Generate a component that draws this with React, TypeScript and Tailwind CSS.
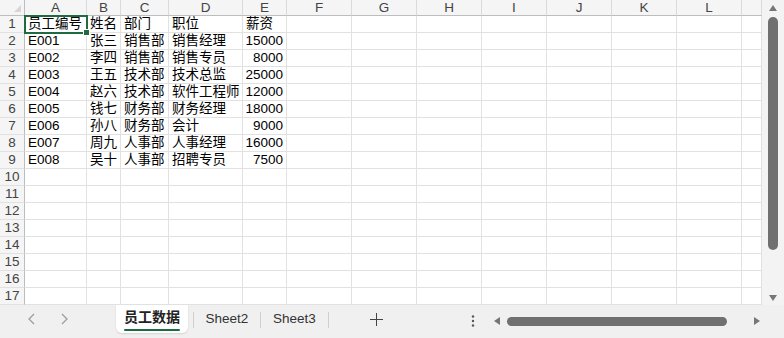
import React from "react";

const data: string[][] = [
  ["员工编号", "姓名", "部门", "职位", "薪资"],
  ["E001", "张三", "销售部", "销售经理", "15000"],
  ["E002", "李四", "销售部", "销售专员", "8000"],
  ["E003", "王五", "技术部", "技术总监", "25000"],
  ["E004", "赵六", "技术部", "软件工程师", "12000"],
  ["E005", "钱七", "财务部", "财务经理", "18000"],
  ["E006", "孙八", "财务部", "会计", "9000"],
  ["E007", "周九", "人事部", "人事经理", "16000"],
  ["E008", "吴十", "人事部", "招聘专员", "7500"],
];

const cols = ["A", "B", "C", "D", "E", "F", "G", "H", "I", "J", "K", "L", ""];
const font = { fontFamily: '"Liberation Sans", "Noto Sans CJK SC", sans-serif' };

function Tri({ dir }: { dir: "up" | "down" | "left" | "right" }) {
  const pts =
    dir === "up"
      ? "0,6 4,0 8,6"
      : dir === "down"
      ? "0,0 8,0 4,6"
      : dir === "left"
      ? "6,0 6,8 0,4"
      : "0,0 6,4 0,8";
  const w = dir === "up" || dir === "down" ? 8 : 6;
  const h = dir === "up" || dir === "down" ? 6 : 8;
  return (
    <svg width={w} height={h} viewBox={`0 0 ${w} ${h}`}>
      <polygon points={pts} fill="#767676" />
    </svg>
  );
}

export default function App() {
  const rows = Array.from({ length: 17 }, (_, i) => i);
  return (
    <div className="w-[784px] h-[338px] bg-white flex flex-col overflow-hidden text-[#000]" style={font}>
      <div className="flex h-[305px]">
        <div className="relative w-[762px] h-[305px] grid grid-cols-[25px_62px_34px_48px_74px_44px_65px_65px_65px_65px_65px_65px_65px_20px] grid-rows-[16px_17px_17px_17px_17px_17px_17px_17px_17px_17px_17px_17px_17px_17px_17px_17px_17px_17px]">
          {/* corner */}
          <div className="relative bg-[#f5f5f5] border-r border-b border-[#bdbdbd]">
            <svg className="absolute right-[3px] bottom-[3px]" width="7" height="7" viewBox="0 0 7 7">
              <polygon points="7,0 7,7 0,7" fill="#d6d6d6" />
            </svg>
          </div>
          {cols.map((c, i) => (
            <div
              key={"h" + i}
              className="bg-[#f5f5f5] border-r border-[#dadada] border-b border-b-[#bdbdbd] flex items-center justify-center text-[13.5px] leading-none text-[#444]"
            >
              {c}
            </div>
          ))}
          {rows.map((r) => (
            <React.Fragment key={"r" + r}>
              <div className="bg-[#f5f5f5] border-r border-r-[#bdbdbd] border-b border-b-[#e1e1e1] flex items-center justify-center text-[13.5px] leading-none text-[#444]">
                {r + 1}
              </div>
              {cols.map((_, ci) => {
                const val = data[r]?.[ci] ?? "";
                const isNum = /^\d+$/.test(val);
                return (
                  <div
                    key={"c" + r + "-" + ci}
                    className={
                      "border-r border-b border-[#e1e1e1] flex items-center overflow-hidden whitespace-nowrap text-[13.5px] leading-none px-[3px] " +
                      (isNum ? "justify-end" : "justify-start")
                    }
                  >
                    {val}
                  </div>
                );
              })}
            </React.Fragment>
          ))}
          {/* selection overlay */}
          <div className="absolute left-[24px] top-[15px] w-[64px] h-[19px] border-2 border-[#1e6b41] pointer-events-none">
            <div className="absolute right-[-4px] bottom-[-4px] w-[5px] h-[5px] bg-[#1e6b41] border border-white box-content" />
          </div>
        </div>
        <div className="w-[22px] h-[305px] bg-[#f3f3f3] flex flex-col items-center pt-[5px]">
          <Tri dir="up" />
          <div className="mt-[6px] w-[10px] h-[233px] rounded-full bg-[#707070]" />
          <div className="mt-auto mb-[4px]">
            <Tri dir="down" />
          </div>
        </div>
      </div>
      <div className="flex-1 bg-[#f0f0f0] flex items-start">
        <div className="w-[116px] h-[28px] flex items-center">
          <span className="ml-[25px] w-[14px] flex justify-center">
            <svg width="8" height="12" viewBox="0 0 8 12">
              <polyline points="6,1 1,6 6,11" fill="none" stroke="#9a9a9a" strokeWidth="1.2" />
            </svg>
          </span>
          <span className="ml-[18px] w-[14px] flex justify-center">
            <svg width="8" height="12" viewBox="0 0 8 12">
              <polyline points="2,1 7,6 2,11" fill="none" stroke="#9a9a9a" strokeWidth="1.2" />
            </svg>
          </span>
        </div>
        <div className="w-[72px] h-[28px] bg-white rounded-b-md shadow-[0_1px_2px_rgba(0,0,0,0.12)] flex flex-col items-center justify-center">
          <span className="text-[14px] font-bold leading-none text-[#222] mt-[2px]">员工数据</span>
          <span className="mt-[5px] w-[56px] h-[2px] bg-[#1e6b41] rounded-full" />
        </div>
        <div className="ml-[5px] mt-[7px] w-px h-[16px] bg-[#cfcfcf]" />
        <div className="w-[66px] h-[28px] flex items-center justify-center text-[13.5px] text-[#333]">Sheet2</div>
        <div className="mt-[7px] w-px h-[16px] bg-[#cfcfcf]" />
        <div className="w-[67px] h-[28px] flex items-center justify-center text-[13.5px] text-[#333]">Sheet3</div>
        <div className="mt-[7px] w-px h-[16px] bg-[#cfcfcf]" />
        <div className="w-[94px] h-[28px] flex items-center justify-center">
          <svg width="13" height="13" viewBox="0 0 13 13">
            <line x1="6.5" y1="0" x2="6.5" y2="13" stroke="#444" strokeWidth="1" />
            <line x1="0" y1="6.5" x2="13" y2="6.5" stroke="#444" strokeWidth="1" />
          </svg>
        </div>
        <div className="ml-[40px] w-[20px] h-[32px] flex items-center justify-center">
          <svg width="4" height="12" viewBox="0 0 4 12">
            <circle cx="2" cy="1.5" r="1.2" fill="#555" />
            <circle cx="2" cy="6" r="1.2" fill="#555" />
            <circle cx="2" cy="10.5" r="1.2" fill="#555" />
          </svg>
        </div>
        <div className="ml-[11px] h-[32px] flex items-center">
          <Tri dir="left" />
          <div className="ml-[7px] w-[220px] h-[9px] rounded-full bg-[#707070]" />
          <div className="ml-[27px]">
            <Tri dir="right" />
          </div>
        </div>
      </div>
    </div>
  );
}
